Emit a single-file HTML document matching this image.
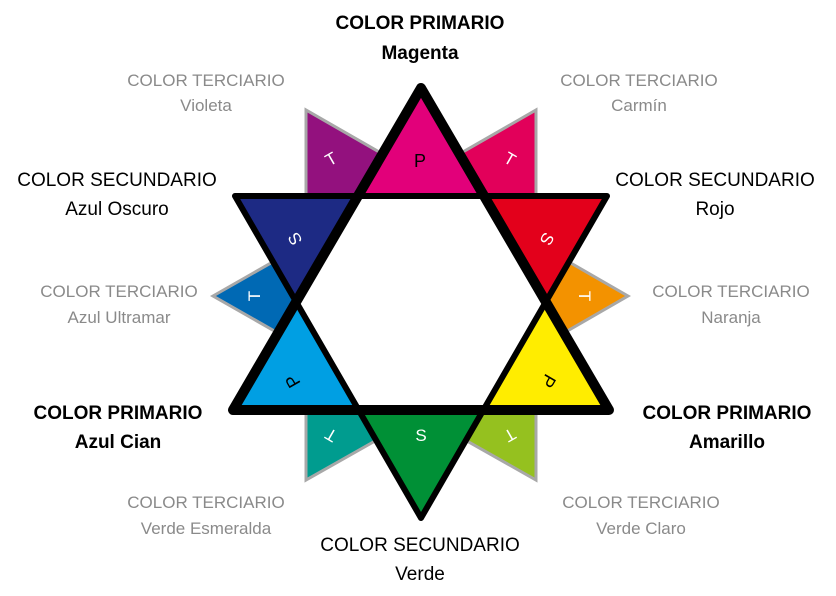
<!DOCTYPE html>
<html><head><meta charset="utf-8"><style>
html,body{margin:0;padding:0;background:#fff;width:836px;height:596px;overflow:hidden}
svg{display:block}
.b{font-family:"Liberation Sans",sans-serif;font-size:19px;font-weight:bold;fill:#000}
.s{font-family:"Liberation Sans",sans-serif;font-size:19px;fill:#000}
.g{font-family:"Liberation Sans",sans-serif;font-size:17px;fill:#8a8a8a}
.l{font-family:"Liberation Sans",sans-serif;font-size:17px;fill:#fff}
</style></head><body>
<svg width="836" height="596" viewBox="0 0 836 596">
<g stroke="#a8a8a8" stroke-width="3" stroke-linejoin="miter">
<polygon points="306,110 306,242 421,176" fill="#93117e"/>
<polygon points="536,110 536,242 421,176" fill="#e2005a"/>
<polygon points="628,296 536,243 536,349" fill="#f39200"/>
<polygon points="213,296 306,243 306,349" fill="#0069b4"/>
<polygon points="306,480 306,349 421,415" fill="#009c8f"/>
<polygon points="536,480 536,349 421,415" fill="#95c11f"/>
</g>
<polygon points="421,88 358,196 484,196" fill="#e2007a"/>
<polygon points="235,196 358,196 296,302" fill="#1d2a84"/>
<polygon points="484,196 607,196 546,302" fill="#e3001b"/>
<polygon points="296,302 233,410 359,410" fill="#009fe3"/>
<polygon points="546,302 609,410 483,410" fill="#ffed00"/>
<polygon points="359,410 483,410 421,518" fill="#009036"/>
<polygon points="358,196 484,196 546,302 483,410 359,410 296,302" fill="#fff"/>
<polygon points="235,196 607,196 421,518" fill="none" stroke="#000" stroke-width="6" stroke-linejoin="round"/>
<polygon points="421,88 233,410 609,410" fill="none" stroke="#000" stroke-width="10" stroke-linejoin="round"/>
<text x="420" y="167" class="s" text-anchor="middle" style="font-size:18px">P</text>
<text class="l" text-anchor="middle" transform="translate(334,164) rotate(-30)">T</text>
<text class="l" text-anchor="middle" transform="translate(507,164) rotate(30)">T</text>
<text class="l" text-anchor="middle" transform="translate(300,236) rotate(-120)">S</text>
<text class="l" text-anchor="middle" transform="translate(542,236) rotate(120)">S</text>
<text class="l" text-anchor="middle" transform="translate(260,296) rotate(-90)">T</text>
<text class="l" text-anchor="middle" transform="translate(579,296) rotate(90)">T</text>
<text class="s" text-anchor="middle" style="font-size:18px" transform="translate(298,378) rotate(-120)">P</text>
<text class="s" text-anchor="middle" style="font-size:18px" transform="translate(543,378) rotate(120)">P</text>
<text class="l" text-anchor="middle" transform="translate(334,430) rotate(-150)">T</text>
<text class="l" text-anchor="middle" transform="translate(507,430) rotate(150)">T</text>
<text class="l" text-anchor="middle" x="421" y="441">S</text>
<text class="b" x="420" y="29" text-anchor="middle">COLOR PRIMARIO</text>
<text class="b" x="420" y="59" text-anchor="middle">Magenta</text>
<text class="g" x="206" y="86" text-anchor="middle">COLOR TERCIARIO</text>
<text class="g" x="206" y="111" text-anchor="middle">Violeta</text>
<text class="g" x="639" y="86" text-anchor="middle">COLOR TERCIARIO</text>
<text class="g" x="639" y="111" text-anchor="middle">Carmín</text>
<text class="s" x="117" y="186" text-anchor="middle">COLOR SECUNDARIO</text>
<text class="s" x="117" y="215" text-anchor="middle">Azul Oscuro</text>
<text class="s" x="715" y="186" text-anchor="middle">COLOR SECUNDARIO</text>
<text class="s" x="715" y="215" text-anchor="middle">Rojo</text>
<text class="g" x="119" y="297" text-anchor="middle">COLOR TERCIARIO</text>
<text class="g" x="119" y="323" text-anchor="middle">Azul Ultramar</text>
<text class="g" x="731" y="297" text-anchor="middle">COLOR TERCIARIO</text>
<text class="g" x="731" y="323" text-anchor="middle">Naranja</text>
<text class="b" x="118" y="419" text-anchor="middle">COLOR PRIMARIO</text>
<text class="b" x="118" y="448" text-anchor="middle">Azul Cian</text>
<text class="b" x="727" y="419" text-anchor="middle">COLOR PRIMARIO</text>
<text class="b" x="727" y="448" text-anchor="middle">Amarillo</text>
<text class="g" x="206" y="508" text-anchor="middle">COLOR TERCIARIO</text>
<text class="g" x="206" y="534" text-anchor="middle">Verde Esmeralda</text>
<text class="g" x="641" y="508" text-anchor="middle">COLOR TERCIARIO</text>
<text class="g" x="641" y="534" text-anchor="middle">Verde Claro</text>
<text class="s" x="420" y="551" text-anchor="middle">COLOR SECUNDARIO</text>
<text class="s" x="420" y="580" text-anchor="middle">Verde</text>
</svg>
</body></html>
